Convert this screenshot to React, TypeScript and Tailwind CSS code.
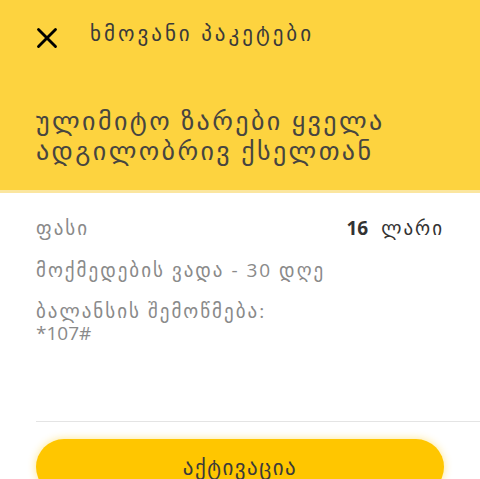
import { X } from 'lucide-react'

const font = '[font-family:"Open_Sans","DejaVu_Sans",sans-serif]'

export default function App() {
  return (
    <div className={`h-[479px] w-[480px] overflow-hidden bg-white ${font}`}>
      <header className="h-[190px] bg-[#fdd33f] pl-[30px] pr-9">
        <div className="flex h-[68px] items-center gap-[26px]">
          <X className="h-[34px] w-[34px] translate-y-[4px] text-black" strokeWidth={2} />
          <h1 className="text-[21px] tracking-[3px] text-[#3a3a3a]">ხმოვანი პაკეტები</h1>
        </div>
        <p className="ml-[6px] mt-[37px] text-[26px] leading-[30px] tracking-[2.4px] text-[#474540]">
          ულიმიტო ზარები ყველა
          <br />
          ადგილობრივ ქსელთან
        </p>
      </header>
      <div className="h-[3px] bg-[#fbe6a0]" />

      <main className="pl-9 text-[19px] leading-[22px] tracking-[2px]">
        <div className="flex items-center justify-between pr-9 pt-[24px]">
          <span className="text-[#8a8a8a]">ფასი</span>
          <span className="text-[#333]">
            <b className="font-bold tracking-normal">16</b>
            <span className="ml-[13px]">ლარი</span>
          </span>
        </div>
        <p className="mt-[20px] text-[#8a8a8a]">მოქმედების ვადა - 30 დღე</p>
        <p className="mt-[19px] text-[#8a8a8a]">
          ბალანსის შემოწმება:
          <br />
          <span className="tracking-normal">*107#</span>
        </p>

        <div className="mt-[77px] border-t border-[#e4e4e4]" />
        <div className="pr-9 pt-[17px]">
          <button className="flex h-[56px] w-full items-center justify-center rounded-full bg-[#ffc600] text-[21px] tracking-[1.5px] text-[#3a3a3a] shadow-[0_0_8px_rgba(255,200,0,0.45)]">
            აქტივაცია
          </button>
        </div>
      </main>
    </div>
  )
}
